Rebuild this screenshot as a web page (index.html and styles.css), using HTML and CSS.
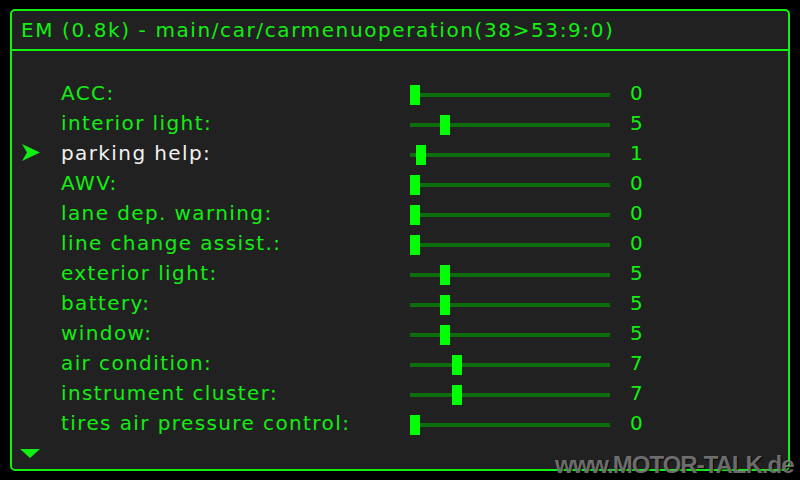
FILE: index.html
```html
<!DOCTYPE html>
<html>
<head>
<meta charset="utf-8">
<link rel="stylesheet" href="styles.css">
</head>
<body>
<div class="panel">
  <div class="header">EM (0.8k) - main/car/carmenuoperation(38&gt;53:9:0)</div>
  <div class="list">
    <div class="row"><span class="mark"></span><span class="label">ACC:</span><span class="track"><span class="knob" style="left:0px"></span></span><span class="val">0</span></div>
    <div class="row"><span class="mark"></span><span class="label">interior light:</span><span class="track"><span class="knob" style="left:30px"></span></span><span class="val">5</span></div>
    <div class="row sel"><span class="mark"><svg width="19" height="18" viewBox="0 0 19 18"><polygon points="0,0 18,8.5 0,17 5,8.5" fill="#11ee11"/></svg></span><span class="label">parking help:</span><span class="track"><span class="knob" style="left:6px"></span></span><span class="val">1</span></div>
    <div class="row"><span class="mark"></span><span class="label">AWV:</span><span class="track"><span class="knob" style="left:0px"></span></span><span class="val">0</span></div>
    <div class="row"><span class="mark"></span><span class="label">lane dep. warning:</span><span class="track"><span class="knob" style="left:0px"></span></span><span class="val">0</span></div>
    <div class="row"><span class="mark"></span><span class="label">line change assist.:</span><span class="track"><span class="knob" style="left:0px"></span></span><span class="val">0</span></div>
    <div class="row"><span class="mark"></span><span class="label">exterior light:</span><span class="track"><span class="knob" style="left:30px"></span></span><span class="val">5</span></div>
    <div class="row"><span class="mark"></span><span class="label">battery:</span><span class="track"><span class="knob" style="left:30px"></span></span><span class="val">5</span></div>
    <div class="row"><span class="mark"></span><span class="label">window:</span><span class="track"><span class="knob" style="left:30px"></span></span><span class="val">5</span></div>
    <div class="row"><span class="mark"></span><span class="label">air condition:</span><span class="track"><span class="knob" style="left:42px"></span></span><span class="val">7</span></div>
    <div class="row"><span class="mark"></span><span class="label">instrument cluster:</span><span class="track"><span class="knob" style="left:42px"></span></span><span class="val">7</span></div>
    <div class="row"><span class="mark"></span><span class="label">tires air pressure control:</span><span class="track"><span class="knob" style="left:0px"></span></span><span class="val">0</span></div>
  </div>
  <div class="more"><svg width="20" height="9" viewBox="0 0 20 9"><polygon points="0,0 20,0 10,9" fill="#11ee11"/></svg></div>
</div>
<div class="watermark">www.MOTOR-TALK.de</div>
</body>
</html>
```
FILE: styles.css
```css
html, body {
  margin: 0;
  padding: 0;
  background: #000;
  width: 800px;
  height: 480px;
  overflow: hidden;
}
body {
  padding-top: 9px;
  padding-left: 10px;
  box-sizing: border-box;
  font-family: "DejaVu Sans", sans-serif;
}
.panel {
  width: 780px;
  height: 462px;
  box-sizing: border-box;
  border: 2px solid #11f011;
  border-radius: 5px;
  background: #212121;
  display: flex;
  flex-direction: column;
}
.header {
  height: 38px;
  line-height: 38px;
  border-bottom: 2px solid #11f011;
  padding-left: 9px;
  color: #11ee11;
  font-size: 20px;
  letter-spacing: 1.6px;
  white-space: nowrap;
}
.list {
  padding-top: 27px;
  display: flex;
  flex-direction: column;
}
.row {
  height: 30px;
  display: grid;
  grid-template-columns: 49px 349px 200px 20px auto;
  align-items: center;
  color: #11ee11;
  font-size: 20px;
  letter-spacing: 1.4px;
}
.row > .val { grid-column: 5; }
.row.sel .label { color: #f2f2f2; }
.mark {
  display: flex;
  align-items: center;
  padding-left: 10px;
  height: 30px;
}
.mark svg { display: block; }
.label {
  white-space: nowrap;
  line-height: 30px;
}
.track {
  position: relative;
  height: 4px;
  background: #0b6e0b;
  margin-top: 4px;
}
.knob {
  position: absolute;
  top: -8px;
  width: 10px;
  height: 20px;
  background: #00ff00;
}
.more {
  padding-left: 8px;
  padding-top: 11px;
}
.more svg { display: block; }
.watermark {
  position: absolute;
  left: 555px;
  top: 451px;
  font-family: "Liberation Sans", sans-serif;
  font-weight: bold;
  font-size: 24px;
  letter-spacing: -1px;
  color: rgba(140,140,140,0.75);
  text-shadow: 1px 1px 1px rgba(0,0,0,0.8);
  white-space: nowrap;
}
```
